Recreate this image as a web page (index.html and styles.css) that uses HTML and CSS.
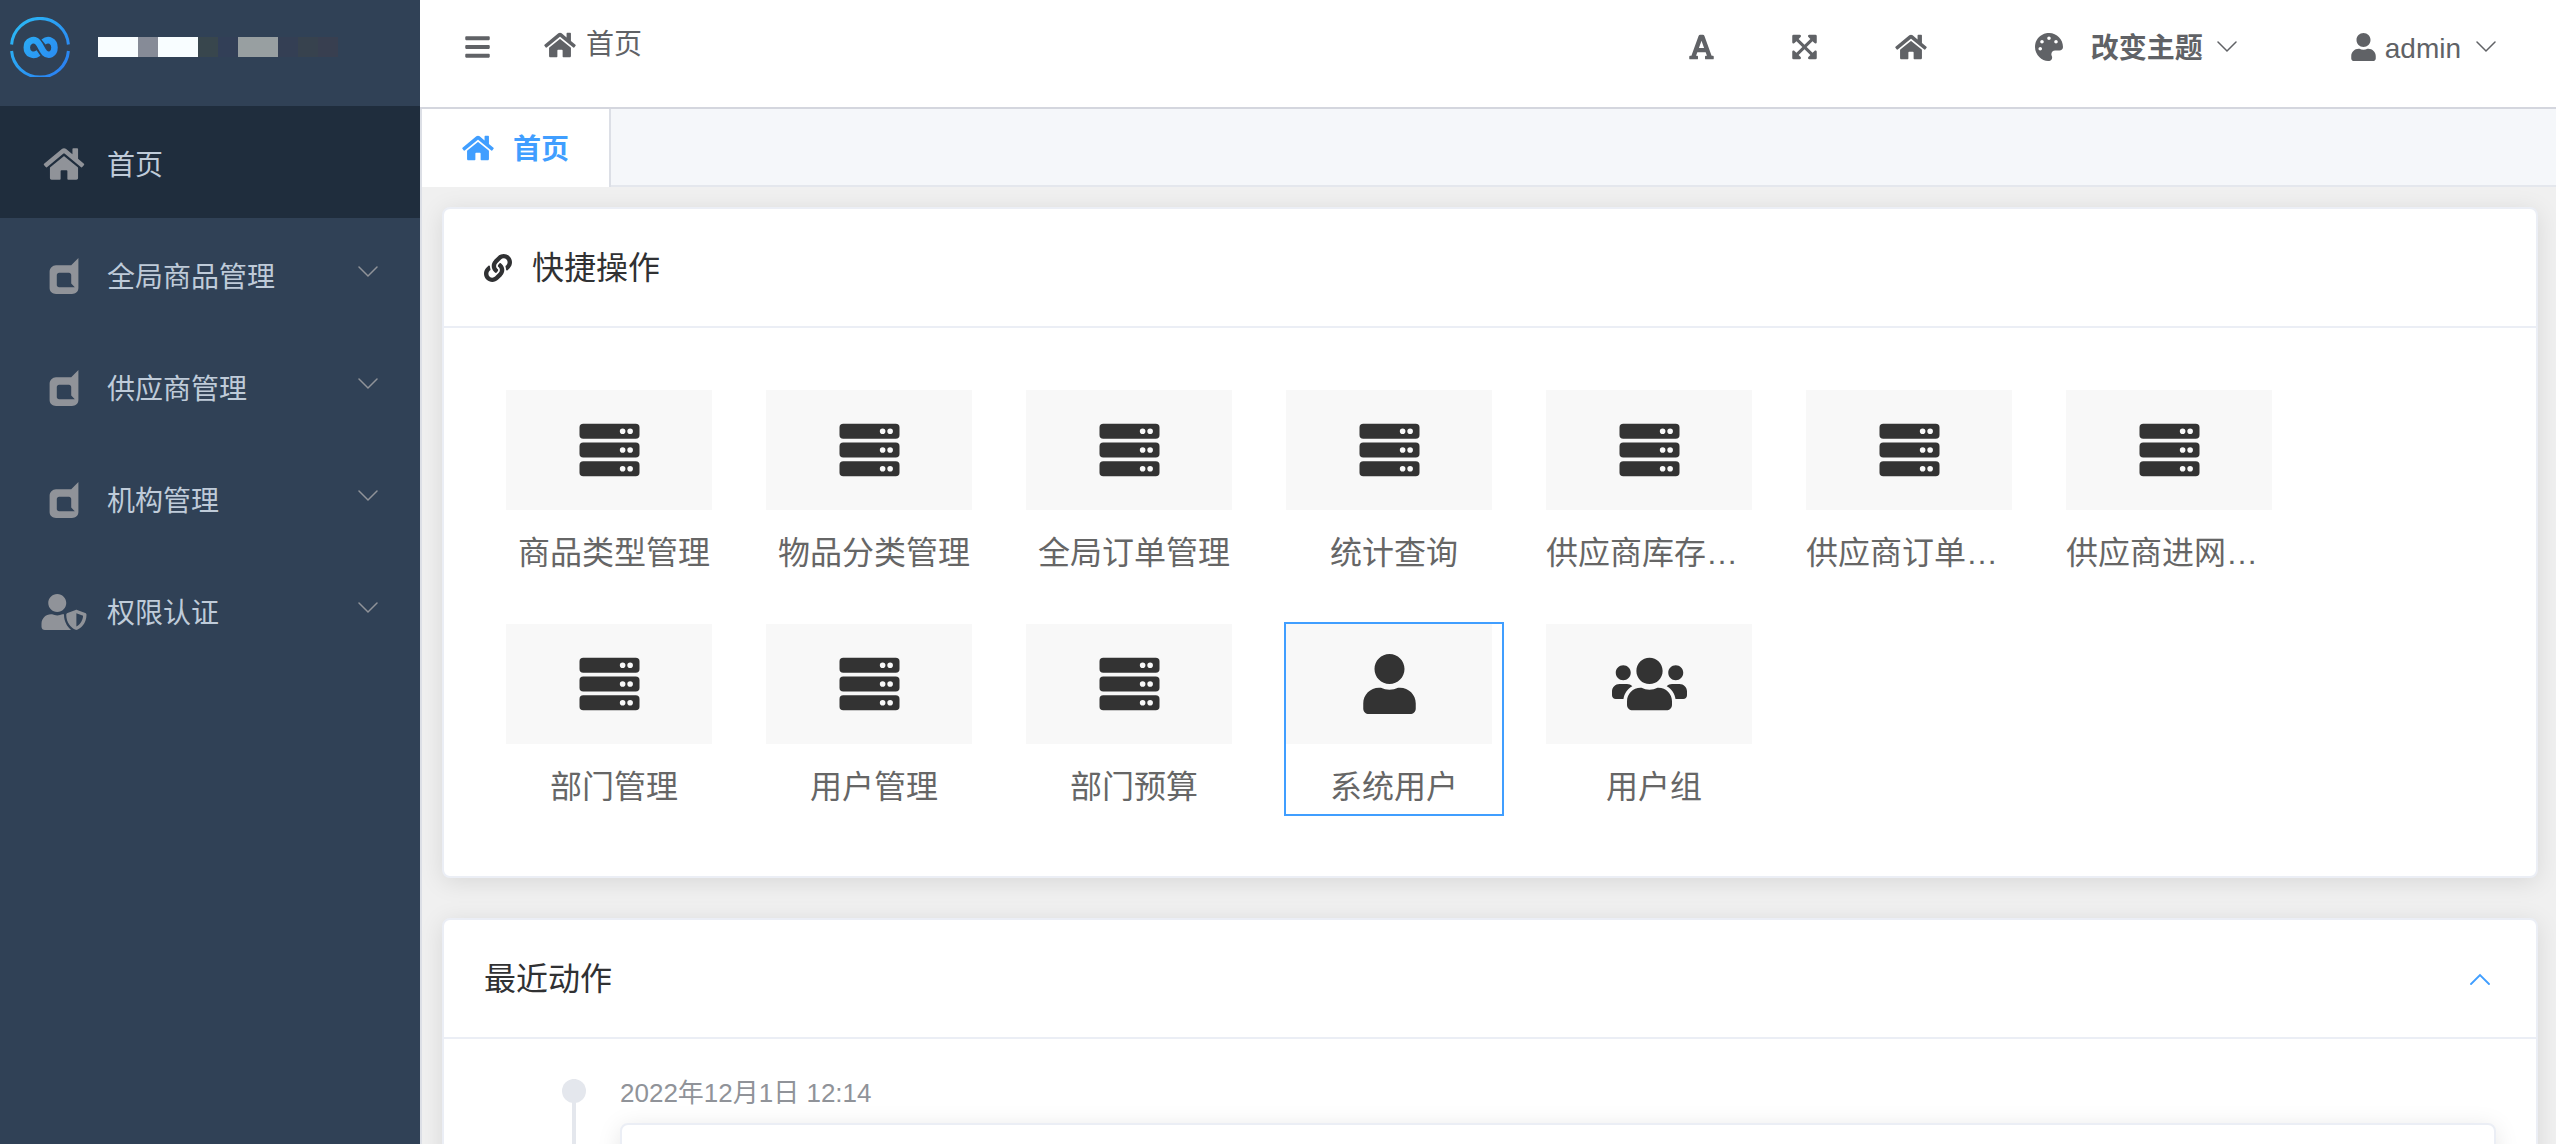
FILE: index.html
```html
<!DOCTYPE html>
<html lang="zh-CN">
<head>
<meta charset="utf-8">
<meta name="viewport" content="width=device-width, initial-scale=1">
<title>首页</title>
<link rel="stylesheet" href="styles.css">
</head>
<body>
<svg class="sprite" aria-hidden="true">
  <symbol id="i-home" viewBox="0 0 576 512"><path d="M488 312.7V456c0 13.3-10.7 24-24 24H348c-6.6 0-12-5.4-12-12V356c0-6.6-5.4-12-12-12h-72c-6.6 0-12 5.4-12 12v112c0 6.6-5.4 12-12 12H112c-13.3 0-24-10.7-24-24V312.7c0-3.6 1.6-7 4.4-9.3l188-154.8c4.4-3.6 10.8-3.6 15.3 0l188 154.8c2.7 2.3 4.3 5.7 4.3 9.3zm83.6-60.9L488 182.9V44.4c0-6.6-5.4-12-12-12h-56c-6.6 0-12 5.4-12 12V117l-89.5-73.7c-17.7-14.6-43.3-14.6-61 0L4.4 251.8c-5.1 4.2-5.8 11.8-1.6 16.9l25.5 31c4.2 5.1 11.8 5.8 16.9 1.6l235.2-193.7c4.4-3.6 10.8-3.6 15.3 0l235.2 193.7c5.1 4.2 12.7 3.5 16.9-1.6l25.5-31c4.2-5.2 3.4-12.7-1.7-16.9z"/></symbol>
  <symbol id="i-dashcube" viewBox="0 0 448 512"><path d="M326.6 104H110.4c-51.1 0-91.2 43.3-91.2 93.5V427c0 50.5 40.1 85 91.2 85h227.2c51.1 0 91.2-34.5 91.2-85V0L326.6 104zM153.9 416.5c-17.7 0-32.4-15.1-32.4-32.8V240.8c0-17.7 14.7-32.5 32.4-32.5h140.7c17.7 0 32 14.8 32 32.5v123.5l51.1 52.3H153.9z"/></symbol>
  <symbol id="i-user-shield" viewBox="0 0 640 512"><path d="M622.3 271.1l-115.2-45c-4.1-1.6-12.6-3.7-22.2 0l-115.2 45c-10.7 4.2-17.7 14-17.7 24.9 0 111.6 68.7 188.8 132.9 213.9 9.6 3.7 18 1.6 22.2 0C558.4 489.9 640 420.5 640 296c0-10.9-7-20.7-17.7-24.9zM496 462.4V273.3l95.5 37.3c-5.6 87.1-60.9 135.4-95.5 151.8zM224 256c70.7 0 128-57.3 128-128S294.7 0 224 0 96 57.3 96 128s57.3 128 128 128zm96 40c0-2.5.8-4.8 1.1-7.2-2.5-.1-4.9-.8-7.5-.8h-16.7c-22.2 10.2-46.9 16-72.9 16s-50.6-5.8-72.9-16h-16.7C60.2 288 0 348.2 0 422.4V464c0 26.5 21.5 48 48 48h352c6.8 0 13.3-1.5 19.2-4-54-42.9-99.2-116.7-99.2-212z"/></symbol>
  <symbol id="i-bars" viewBox="0 0 448 512"><path d="M16 132h416c8.837 0 16-7.163 16-16V76c0-8.837-7.163-16-16-16H16C7.163 60 0 67.163 0 76v40c0 8.837 7.163 16 16 16zm0 160h416c8.837 0 16-7.163 16-16v-40c0-8.837-7.163-16-16-16H16c-8.837 0-16 7.163-16 16v40c0 8.837 7.163 16 16 16zm0 160h416c8.837 0 16-7.163 16-16v-40c0-8.837-7.163-16-16-16H16c-8.837 0-16 7.163-16 16v40c0 8.837 7.163 16 16 16z"/></symbol>
  <symbol id="i-font" viewBox="0 0 448 512"><path d="M432 416h-23.41L277.88 53.69A32 32 0 0 0 247.58 32h-47.16a32 32 0 0 0-30.3 21.69L39.41 416H16a16 16 0 0 0-16 16v32a16 16 0 0 0 16 16h128a16 16 0 0 0 16-16v-32a16 16 0 0 0-16-16h-19.58l23.3-64h152.56l23.3 64H304a16 16 0 0 0-16 16v32a16 16 0 0 0 16 16h128a16 16 0 0 0 16-16v-32a16 16 0 0 0-16-16zM176.85 272L224 142.51 271.15 272z"/></symbol>
  <symbol id="i-expand" viewBox="0 0 448 512"><path d="M448 344v112a23.94 23.94 0 0 1-24 24H312c-21.39 0-32.09-25.9-17-41l36.2-36.2L224 295.6 116.77 402.9 153 439c15.09 15.1 4.39 41-17 41H24a23.94 23.94 0 0 1-24-24V344c0-21.4 25.89-32.1 41-17l36.19 36.2L184.46 256 77.18 148.7 41 185c-15.1 15.1-41 4.4-41-17V56a23.94 23.94 0 0 1 24-24h112c21.39 0 32.09 25.9 17 41l-36.2 36.2L224 216.4l107.23-107.3L295 73c-15.09-15.1-4.39-41 17-41h112a23.94 23.94 0 0 1 24 24v112c0 21.4-25.89 32.1-41 17l-36.19-36.2L263.54 256l107.28 107.3L407 327.1c15.1-15.2 41-4.5 41 16.9z"/></symbol>
  <symbol id="i-palette" viewBox="0 0 512 512"><path d="M204.3 5C104.9 24.4 24.8 104.3 5.2 203.4c-37 187 131.7 326.4 258.8 306.7 41.2-6.4 61.4-54.6 42.5-91.7-23.1-45.4 9.9-98.4 60.9-98.4h79.7c35.8 0 64.8-29.6 64.9-65.3C511.5 97.1 368.1-26.9 204.3 5zM96 320c-17.7 0-32-14.3-32-32s14.3-32 32-32 32 14.3 32 32-14.3 32-32 32zm32-128c-17.7 0-32-14.3-32-32s14.3-32 32-32 32 14.3 32 32-14.3 32-32 32zm128-64c-17.7 0-32-14.3-32-32s14.3-32 32-32 32 14.3 32 32-14.3 32-32 32zm128 64c-17.7 0-32-14.3-32-32s14.3-32 32-32 32 14.3 32 32-14.3 32-32 32z"/></symbol>
  <symbol id="i-user" viewBox="0 0 448 512"><path d="M224 256c70.7 0 128-57.3 128-128S294.7 0 224 0 96 57.3 96 128s57.3 128 128 128zm89.6 32h-16.7c-22.2 10.2-46.9 16-72.9 16s-50.6-5.8-72.9-16h-16.7C60.2 288 0 348.2 0 422.4V464c0 26.5 21.5 48 48 48h352c26.5 0 48-21.5 48-48v-41.6c0-74.2-60.2-134.4-134.4-134.4z"/></symbol>
  <symbol id="i-users" viewBox="0 0 640 512"><path d="M96 224c35.3 0 64-28.7 64-64s-28.7-64-64-64-64 28.7-64 64 28.7 64 64 64zm448 0c35.3 0 64-28.7 64-64s-28.7-64-64-64-64 28.7-64 64 28.7 64 64 64zm32 32h-64c-17.6 0-33.5 7.1-45.1 18.6 40.3 22.1 68.9 62 75.1 109.4h66c17.7 0 32-14.3 32-32v-32c0-35.3-28.7-64-64-64zm-256 0c61.9 0 112-50.1 112-112S381.9 32 320 32 208 82.1 208 144s50.1 112 112 112zm76.8 32h-8.3c-20.8 10-43.9 16-68.5 16s-47.6-6-68.5-16h-8.3C179.6 288 128 339.6 128 403.2V432c0 26.5 21.5 48 48 48h288c26.5 0 48-21.5 48-48v-28.8c0-63.6-51.6-115.2-115.2-115.2zm-223.7-13.4C161.5 263.1 145.6 256 128 256H64c-35.3 0-64 28.7-64 64v32c0 17.7 14.3 32 32 32h65.9c6.3-47.4 34.9-87.3 75.2-109.4z"/></symbol>
  <symbol id="i-link" viewBox="0 0 512 512"><path d="M326.612 185.391c59.747 59.809 58.927 155.698.36 214.59-.11.12-.24.25-.36.37l-67.2 67.2c-59.27 59.27-155.699 59.262-214.96 0-59.27-59.26-59.27-155.7 0-214.96l37.106-37.106c9.84-9.84 26.786-3.3 27.294 10.606.648 17.722 3.826 35.527 9.69 52.721 1.986 5.822.567 12.262-3.783 16.612l-13.087 13.087c-28.026 28.026-28.905 73.66-1.155 101.96 28.024 28.579 74.086 28.749 102.325.51l67.2-67.19c28.191-28.191 28.073-73.757 0-101.83-3.701-3.694-7.429-6.564-10.341-8.569a16.037 16.037 0 0 1-6.947-12.606c-.396-10.567 3.348-21.456 11.698-29.806l21.054-21.055c5.521-5.521 14.182-6.199 20.584-1.731a152.482 152.482 0 0 1 20.522 17.197zM467.547 44.449c-59.261-59.262-155.69-59.27-214.96 0l-67.2 67.2c-.12.12-.25.25-.36.37-58.566 58.892-59.387 154.781.36 214.59a152.454 152.454 0 0 0 20.521 17.196c6.402 4.468 15.064 3.789 20.584-1.731l21.054-21.055c8.35-8.35 12.094-19.239 11.698-29.806a16.037 16.037 0 0 0-6.947-12.606c-2.912-2.005-6.64-4.875-10.341-8.569-28.073-28.073-28.191-73.639 0-101.83l67.2-67.19c28.239-28.239 74.3-28.069 102.325.51 27.75 28.3 26.872 73.934-1.155 101.96l-13.087 13.087c-4.35 4.35-5.769 10.79-3.783 16.612 5.864 17.194 9.042 34.999 9.69 52.721.509 13.906 17.454 20.446 27.294 10.606l37.106-37.106c59.271-59.259 59.271-155.699.001-214.959z"/></symbol>
  <symbol id="i-server" viewBox="0 0 512 512"><path fill-rule="evenodd" d="M32 32h448a32 32 0 0 1 32 32v64a32 32 0 0 1-32 32H32a32 32 0 0 1-32-32V64a32 32 0 0 1 32-32zM432 72a24 24 0 1 0 0 48 24 24 0 0 0 0-48zM368 72a24 24 0 1 0 0 48 24 24 0 0 0 0-48zM32 192h448a32 32 0 0 1 32 32v64a32 32 0 0 1-32 32H32a32 32 0 0 1-32-32v-64a32 32 0 0 1 32-32zM432 232a24 24 0 1 0 0 48 24 24 0 0 0 0-48zM368 232a24 24 0 1 0 0 48 24 24 0 0 0 0-48zM32 352h448a32 32 0 0 1 32 32v64a32 32 0 0 1-32 32H32a32 32 0 0 1-32-32v-64a32 32 0 0 1 32-32zM432 392a24 24 0 1 0 0 48 24 24 0 0 0 0-48zM368 392a24 24 0 1 0 0 48 24 24 0 0 0 0-48z"/></symbol>
  <symbol id="i-down" viewBox="0 0 20 12"><path d="M1 1l9 9 9-9" fill="none" stroke="currentColor" stroke-width="1.5" stroke-linecap="round"/></symbol>
  <symbol id="i-up" viewBox="0 0 20 12"><path d="M1 11l9-9 9 9" fill="none" stroke="currentColor" stroke-width="1.8" stroke-linecap="round"/></symbol>
</svg>

<div class="app">
  <aside class="sidebar">
    <div class="brand">
      <svg class="brand-logo" viewBox="0 0 60 60" role="img" aria-label="logo">
        <defs><linearGradient id="lg" gradientUnits="userSpaceOnUse" x1="4" y1="8" x2="56" y2="52"><stop offset="0" stop-color="#2bb8f5"/><stop offset="1" stop-color="#2a80f2"/></linearGradient></defs>
        <g fill="none" stroke="url(#lg)">
          <path stroke-width="3" d="M1.6 27.5A28.5 28.500 0 0 1 58.4 27.5M1.6 34A28.5 28.500 0 0 0 58.4 34"/>
          <path stroke-width="6.5" d="M28.500 36C23 40 16.800 37 16.800 30.500C16.800 24 24 20.800 28 25.500C31 29 31.500 32.500 34.500 35.800C39 40 44.500 37 44.500 30.500C44.500 24 38.500 21 33.500 25"/>
        </g>
      </svg>
      <svg class="brand-name" viewBox="0 0 240 20" aria-hidden="true">
        <path fill="#f8fdff" d="M0 0h40v20H0zM60 0h40v20H60z"/><path fill="#868b97" d="M40 0h20v20H40z"/>
        <path fill="#38464d" d="M100 0h20v20h-20z"/><path fill="#323f57" d="M120 0h20v20h-20z"/>
        <path fill="#989fa1" d="M140 0h40v20h-40z"/><path fill="#343f54" d="M180 0h20v20h-20z"/>
        <path fill="#37424e" d="M200 0h20v20h-20z"/><path fill="#383f50" d="M220 0h20v20h-20z"/>
      </svg>
    </div>
    <nav class="menu">
      <a class="menu-item active" href="#"><svg class="menu-icon"><use href="#i-home"/></svg><span class="menu-label">首页</span></a>
      <a class="menu-item" href="#"><svg class="menu-icon"><use href="#i-dashcube"/></svg><span class="menu-label">全局商品管理</span><svg class="menu-arrow"><use href="#i-down"/></svg></a>
      <a class="menu-item" href="#"><svg class="menu-icon"><use href="#i-dashcube"/></svg><span class="menu-label">供应商管理</span><svg class="menu-arrow"><use href="#i-down"/></svg></a>
      <a class="menu-item" href="#"><svg class="menu-icon"><use href="#i-dashcube"/></svg><span class="menu-label">机构管理</span><svg class="menu-arrow"><use href="#i-down"/></svg></a>
      <a class="menu-item" href="#"><svg class="menu-icon"><use href="#i-user-shield"/></svg><span class="menu-label">权限认证</span><svg class="menu-arrow"><use href="#i-down"/></svg></a>
    </nav>
  </aside>

  <div class="main">
    <header class="topbar">
      <button class="tool" type="button" aria-label="折叠菜单"><svg class="icon narrow"><use href="#i-bars"/></svg></button>
      <div class="crumb"><svg class="icon"><use href="#i-home"/></svg><span>首页</span></div>
      <div class="tools">
        <button class="tool" type="button" aria-label="字体"><svg class="icon narrow"><use href="#i-font"/></svg></button>
        <button class="tool" type="button" aria-label="全屏"><svg class="icon narrow"><use href="#i-expand"/></svg></button>
        <button class="tool" type="button" aria-label="主页"><svg class="icon"><use href="#i-home"/></svg></button>
        <button class="tool theme" type="button"><svg class="icon square"><use href="#i-palette"/></svg><span class="theme-label">改变主题</span><svg class="arrow"><use href="#i-down"/></svg></button>
        <button class="tool user" type="button"><svg class="icon narrow"><use href="#i-user"/></svg><span class="user-label">admin</span><svg class="arrow"><use href="#i-down"/></svg></button>
      </div>
    </header>

    <div class="workspace">
      <nav class="tabs"><a class="tab" href="#"><svg class="icon"><use href="#i-home"/></svg><span class="tab-label">首页</span></a></nav>

      <main class="content">
        <section class="card">
          <h2 class="card-head"><svg class="icon square"><use href="#i-link"/></svg><span>快捷操作</span></h2>
          <div class="quick">
            <a class="quick-item" href="#"><span class="tile"><svg class="tile-icon"><use href="#i-server"/></svg></span><span class="quick-label">商品类型管理</span></a>
            <a class="quick-item" href="#"><span class="tile"><svg class="tile-icon"><use href="#i-server"/></svg></span><span class="quick-label">物品分类管理</span></a>
            <a class="quick-item" href="#"><span class="tile"><svg class="tile-icon"><use href="#i-server"/></svg></span><span class="quick-label">全局订单管理</span></a>
            <a class="quick-item" href="#"><span class="tile"><svg class="tile-icon"><use href="#i-server"/></svg></span><span class="quick-label">统计查询</span></a>
            <a class="quick-item" href="#"><span class="tile"><svg class="tile-icon"><use href="#i-server"/></svg></span><span class="quick-label long">供应商库存…</span></a>
            <a class="quick-item" href="#"><span class="tile"><svg class="tile-icon"><use href="#i-server"/></svg></span><span class="quick-label long">供应商订单…</span></a>
            <a class="quick-item" href="#"><span class="tile"><svg class="tile-icon"><use href="#i-server"/></svg></span><span class="quick-label long">供应商进网…</span></a>
            <a class="quick-item" href="#"><span class="tile"><svg class="tile-icon"><use href="#i-server"/></svg></span><span class="quick-label">部门管理</span></a>
            <a class="quick-item" href="#"><span class="tile"><svg class="tile-icon"><use href="#i-server"/></svg></span><span class="quick-label">用户管理</span></a>
            <a class="quick-item" href="#"><span class="tile"><svg class="tile-icon"><use href="#i-server"/></svg></span><span class="quick-label">部门预算</span></a>
            <a class="quick-item selected" href="#"><span class="tile"><svg class="tile-icon"><use href="#i-user"/></svg></span><span class="quick-label">系统用户</span></a>
            <a class="quick-item" href="#"><span class="tile"><svg class="tile-icon"><use href="#i-users"/></svg></span><span class="quick-label">用户组</span></a>
          </div>
        </section>

        <section class="card">
          <h2 class="card-head"><span>最近动作</span><button class="collapse" type="button" aria-label="收起"><svg class="arrow"><use href="#i-up"/></svg></button></h2>
          <ol class="timeline">
            <li class="event">
              <time class="event-time" datetime="2022-12-01T12:14">2022年12月1日 12:14</time>
              <div class="card event-card"></div>
            </li>
          </ol>
        </section>
      </main>
    </div>
  </div>
</div>
</body>
</html>
```
FILE: styles.css
```css
* { box-sizing: border-box; }

body {
  margin: 0;
  font-family: "Liberation Sans", "Noto Sans CJK SC", sans-serif;
  font-size: 28px;
  line-height: 40px;
  color: #606266;
  background: #f0f0f0;
}

a { color: inherit; text-decoration: none; }
button { padding: 0; border: 0; background: none; font: inherit; color: inherit; cursor: pointer; }
svg { display: block; flex: none; fill: currentColor; }
.sprite { position: absolute; width: 0; height: 0; }

.icon { width: 32px; height: 28px; }
.icon.narrow { width: 25px; }
.icon.square { width: 28px; }
.arrow { width: 20px; height: 12px; }

.app { display: flex; height: 100vh; overflow: hidden; }

/* sidebar */
.sidebar { flex: none; width: 420px; background: #304156; }
.brand { display: flex; align-items: center; gap: 28px; height: 106px; padding: 0 10px 12px; }
.brand-logo { width: 60px; height: 60px; }
.brand-name { width: 240px; height: 20px; }
.menu-item {
  display: flex;
  align-items: center;
  height: 112px;
  padding: 4px 42px 0 40px;
  color: #bfcbd9;
}
.menu-item.active { background: #1f2d3d; }
.menu-icon { width: 48px; height: 36px; margin-right: 19px; color: #909399; }
.menu-label { flex: 1; padding-top: 4px; }
.menu-arrow { width: 20px; height: 12px; margin-bottom: 8px; color: #909399; }

/* top bar */
.main { display: flex; flex: 1; flex-direction: column; min-width: 0; }
.topbar {
  display: flex;
  align-items: center;
  height: 109px;
  padding: 0 60px 14px 45px;
  border-bottom: 2px solid #d4d6de;
  background: #fff;
}
.crumb { display: flex; align-items: center; gap: 10px; margin-left: 54px; padding-bottom: 4px; }
.tools { display: flex; align-items: center; gap: 78px; margin-left: auto; }
.tool { display: flex; align-items: center; }
.theme { margin-left: 30px; }
.theme-label { margin: 0 14px 0 28px; padding-top: 4px; font-weight: 700; }
.user { margin-left: 36px; }
.user-label { margin: 0 15px 0 9px; padding-top: 4px; }

/* tabs */
.workspace { display: flex; flex: 1; flex-direction: column; min-height: 0; border-left: 2px solid #dcdfe6; }
.tabs { display: flex; flex: none; height: 78px; background: #f5f7fa; box-shadow: inset 0 -2px #e4e7ed; }
.tab {
  display: flex;
  align-items: center;
  gap: 19px;
  padding: 0 40px;
  border-right: 2px solid #dcdfe6;
  background: #fff;
  color: #409eff;
}
.tab-label { padding-top: 4px; font-weight: 700; }

/* cards */
.content {
  display: flex;
  flex: 1;
  flex-direction: column;
  gap: 40px;
  min-height: 0;
  padding: 20px 18px 20px 20px;
  overflow-y: auto;
  scrollbar-width: none;
}
.card {
  flex: none;
  border: 2px solid #ebeef5;
  border-radius: 8px;
  background: #fff;
  box-shadow: 0 4px 24px rgba(0, 0, 0, 0.1);
}
.card-head {
  display: flex;
  align-items: center;
  gap: 20px;
  height: 119px;
  margin: 0;
  padding: 0 40px;
  border-bottom: 2px solid #ebeef5;
  color: #303133;
  font-size: 32px;
  font-weight: 400;
}
.collapse { margin-left: auto; padding: 4px 6px; color: #409eff; }

/* quick actions */
.quick { display: flex; flex-wrap: wrap; gap: 40px; padding: 60px; }
.quick-item { width: 220px; height: 194px; border: 2px solid transparent; color: #666; }
.quick-item.selected { border-color: #409eff; }
.tile { display: flex; align-items: center; justify-content: center; width: 206px; height: 120px; background: #f8f8f8; color: #333; }
.tile-icon { width: 75px; height: 60px; }
.quick-label {
  display: block;
  margin-top: 19px;
  font-size: 32px;
  line-height: 48px;
  text-align: center;
  white-space: nowrap;
}
.quick-label.long { text-align: left; }

/* timeline */
.timeline { margin: 0; padding: 40px 40px 40px 118px; list-style: none; }
.event { position: relative; padding-left: 58px; }
.event::before {
  content: "";
  position: absolute;
  top: 0;
  bottom: 0;
  left: 10px;
  width: 4px;
  background: #e4e7ed;
}
.event::after {
  content: "";
  position: absolute;
  top: 0;
  left: 0;
  width: 24px;
  height: 24px;
  border-radius: 50%;
  background: #e4e7ed;
}
.event-time { display: block; color: #909399; font-size: 26px; line-height: 28px; }
.event-card { min-height: 160px; margin-top: 16px; }
```
